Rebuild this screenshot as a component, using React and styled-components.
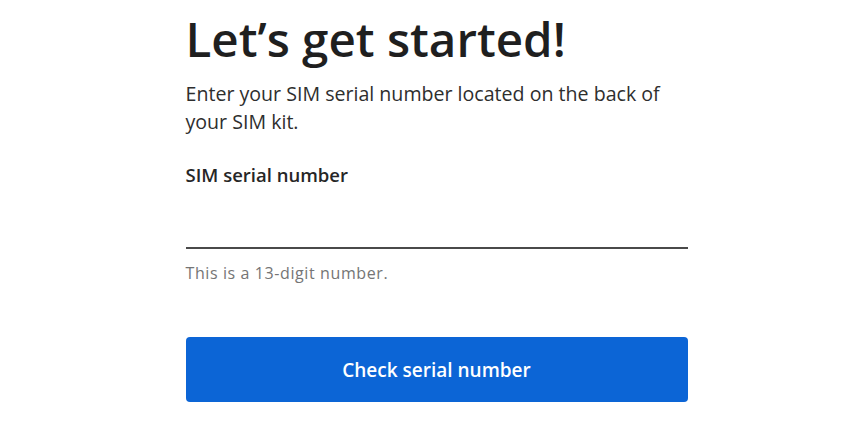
import React from 'react';
import styled, {createGlobalStyle} from 'styled-components';

const Global = createGlobalStyle`
  html, body {
  margin: 0;
  padding: 0;
  background: #ffffff;
  }
  body {
  font-family: "Open Sans", "Liberation Sans", sans-serif;
  color: #222222;
  }
`;

const Page = styled.main`
  display: flex;
  justify-content: center;
  padding: 12px 0 0 30px;
`;

const Column = styled.div`
  width: 502px;
  display: flex;
  flex-direction: column;
`;

const Title = styled.h1`
  margin: 0;
  font-size: 47.5px;
  line-height: 54px;
  font-weight: 600;
  letter-spacing: 0;
  color: #1f1f1f;
`;

const Intro = styled.p`
  margin: 14px 0 0 0;
  font-size: 19.6px;
  line-height: 28px;
  color: #2e2e2e;
`;

const Label = styled.label`
  margin-top: 27px;
  font-size: 18.5px;
  line-height: 24px;
  font-weight: 600;
  color: #262626;
`;

const Input = styled.input`
  margin-top: 20px;
  height: 40px;
  border: none;
  border-bottom: 2px solid #4a4a4a;
  outline: none;
  padding: 0;
  font-size: 19px;
  font-family: inherit;
  background: transparent;
`;

const Hint = styled.div`
  margin-top: 14px;
  font-size: 16px;
  line-height: 20px;
  letter-spacing: 0.6px;
  color: #757575;
`;

const Button = styled.button`
  margin-top: 54px;
  height: 65px;
  border: none;
  border-radius: 4px;
  background: #0c65d6;
  color: #ffffff;
  font-family: inherit;
  font-size: 19px;
  font-weight: 600;
  cursor: pointer;
`;

function App() {
    return(
      <>
        <Global />
        <Page>
            <Column>
                <Title>Let’s get started!</Title>
                <Intro>Enter your SIM serial number located on the back of your SIM kit.</Intro>
                <Label htmlFor="sim">SIM serial number</Label>
                <Input id="sim" type="text" />
                <Hint>This is a 13-digit number.</Hint>
                <Button>Check serial number</Button>
            </Column>
        </Page>
      </>
    );
}

export default App;
